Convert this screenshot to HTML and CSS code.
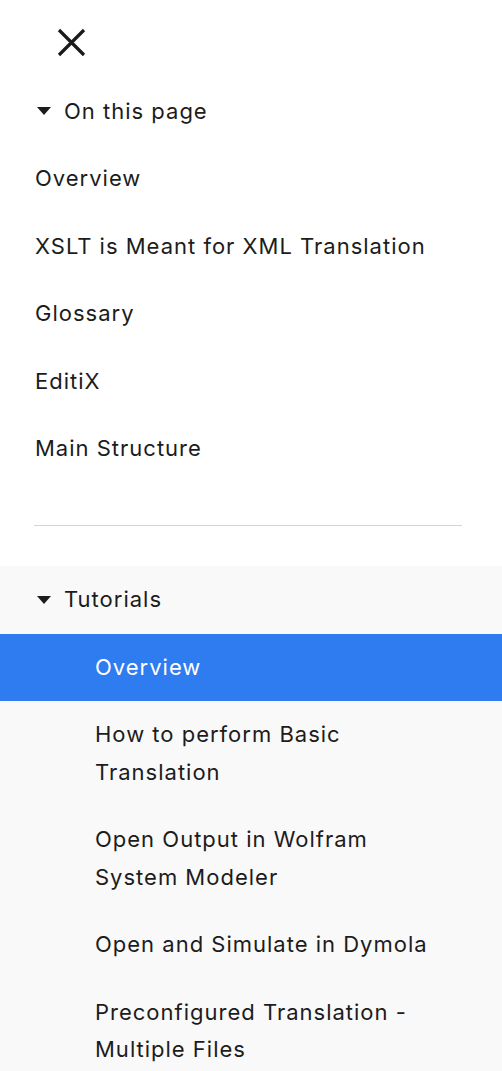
FILE: index.html
```
<!DOCTYPE html>
<html lang="en">
<head>
<meta charset="utf-8">
<title>Navigation</title>
<link rel="stylesheet" href="styles.css">
</head>
<body>
<nav class="drawer">
  <div class="close-row">
    <button class="close" aria-label="Close">
      <svg width="29" height="29" viewBox="0 0 29 29" aria-hidden="true">
        <path d="M2 2 L27 27 M27 2 L2 27" stroke="#1a1a1a" stroke-width="3.2" fill="none"/>
      </svg>
    </button>
  </div>
  <section class="toc">
    <div class="heading"><span class="caret"></span><span>On this page</span></div>
    <ul class="list">
      <li class="item">Overview</li>
      <li class="item">XSLT is Meant for XML Translation</li>
      <li class="item">Glossary</li>
      <li class="item">EditiX</li>
      <li class="item">Main Structure</li>
    </ul>
  </section>
  <hr class="divider">
  <section class="tutorials">
    <div class="heading"><span class="caret"></span><span>Tutorials</span></div>
    <ul class="list sub">
      <li class="item active">Overview</li>
      <li class="item">How to perform Basic<br>Translation</li>
      <li class="item">Open Output in Wolfram<br>System Modeler</li>
      <li class="item">Open and Simulate in Dymola</li>
      <li class="item">Preconfigured Translation -<br>Multiple Files</li>
    </ul>
  </section>
</nav>
</body>
</html>
```
FILE: styles.css
```
html, body {
  margin: 0;
  padding: 0;
  background: #ffffff;
  height: 100%;
  overflow: hidden;
}
body {
  font-family: "Inter", "Noto Sans", sans-serif;
  font-size: 22px;
  letter-spacing: 1px;
  color: #1c1c1c;
}
.drawer {
  display: flex;
  flex-direction: column;
  min-height: 100%;
}
.close-row {
  padding: 28px 0 0 57px;
  height: 49.5px;
}
.close {
  display: block;
  width: 29px;
  height: 29px;
  padding: 0;
  border: 0;
  background: none;
}
.close svg { display: block; }
.heading {
  display: flex;
  align-items: center;
  gap: 13px;
  padding: 15px 0 15px 37px;
  line-height: 37.5px;
}
.caret {
  width: 0;
  height: 0;
  border-left: 7.5px solid transparent;
  border-right: 7.5px solid transparent;
  border-top: 8px solid #1c1c1c;
}
.list {
  list-style: none;
  margin: 0;
  padding: 0;
}
.item {
  padding: 15px 0 15px 35px;
  line-height: 37.5px;
}
.divider {
  margin: 42px 40px 40.5px 34px;
  border: 0;
  border-top: 1px solid #d4d4d4;
  height: 0;
}
.tutorials {
  background: #f9f9f9;
  flex: 1;
}
.sub .item {
  padding-left: 95px;
}
.sub .item.active {
  background: #2f7bf0;
  color: #ffffff;
}
```
